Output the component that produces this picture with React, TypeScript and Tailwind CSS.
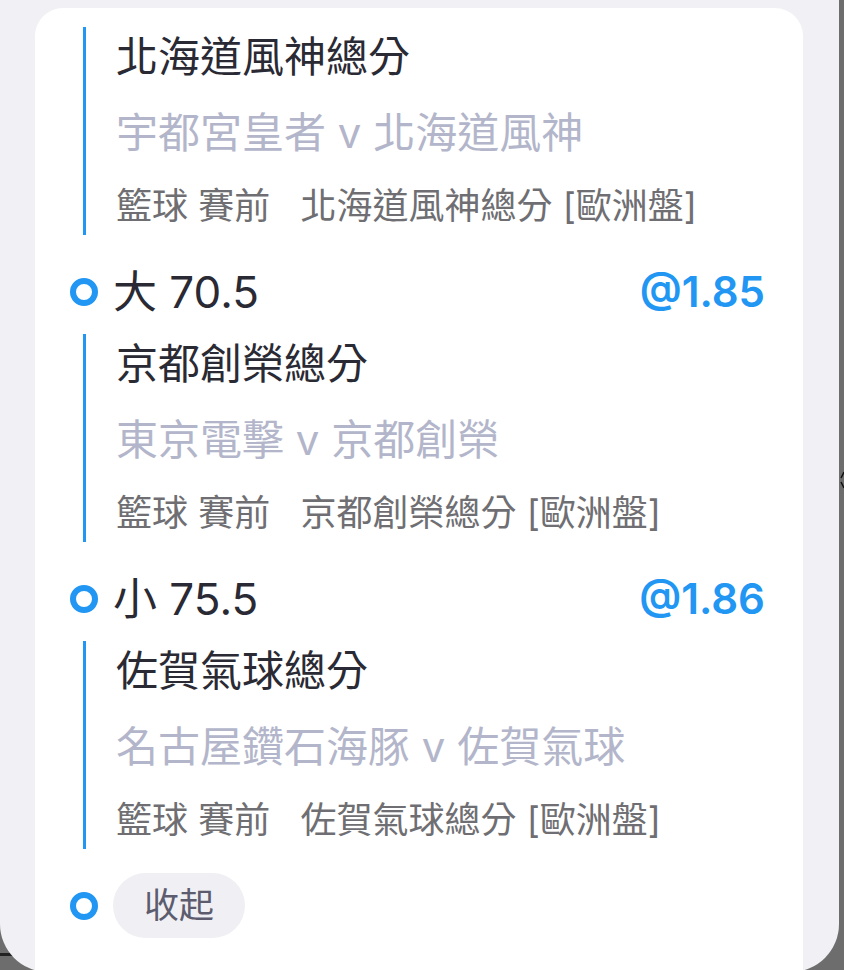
import React from 'react'

type Leg = { title: string; teams: string; meta: string }
type Pick = { label: string; odds: string }

const legs: Leg[] = [
  { title: '北海道風神總分', teams: '宇都宮皇者 v 北海道風神', meta: '北海道風神總分 [歐洲盤]' },
  { title: '京都創榮總分', teams: '東京電擊 v 京都創榮', meta: '京都創榮總分 [歐洲盤]' },
  { title: '佐賀氣球總分', teams: '名古屋鑽石海豚 v 佐賀氣球', meta: '佐賀氣球總分 [歐洲盤]' },
]

const picks: Pick[] = [
  { label: '大 70.5', odds: '@1.85' },
  { label: '小 75.5', odds: '@1.86' },
]

const font = { fontFamily: 'Inter, "Noto Sans CJK TC", sans-serif' }

function Dot() {
  return (
    <div className="w-[28px] flex justify-center">
      <div className="shrink-0 w-[28px] h-[28px] rounded-full border-[6px] border-[#2196f3] bg-white" />
    </div>
  )
}

function LegBlock({ leg }: { leg: Leg }) {
  return (
    <div className="flex h-[208px]">
      <div className="w-[28px] flex justify-center">
        <div className="w-[3px] h-full bg-[#2196f3]" />
      </div>
      <div className="flex flex-col pl-[18px]">
        <div className="text-[42px] leading-[60px] text-[#2a2a34]">{leg.title}</div>
        <div className="mt-[16px] text-[42px] leading-[60px] text-[#b3b6ca] whitespace-pre">{leg.teams}</div>
        <div className="mt-[18px] text-[36px] leading-[50px] text-[#6f6f73] whitespace-pre">
          {'籃球 賽前   ' + leg.meta}
        </div>
      </div>
    </div>
  )
}

function PickRow({ pick }: { pick: Pick }) {
  return (
    <div className="h-[99px] pt-[14px] flex items-center">
      <Dot />
      <div className="flex-1 flex items-center justify-between pl-[15px] pr-[38px]">
        <span className="text-[44px] leading-none text-[#2a2a34] whitespace-pre">{pick.label}</span>
        <span className="text-[42px] leading-none font-semibold text-[#2196f3]">{pick.odds}</span>
      </div>
    </div>
  )
}

export default function App() {
  return (
    <div className="relative w-[844px] h-[970px] bg-[#6d6d6d] overflow-hidden" style={font}>
      <svg className="absolute left-[840px] top-[470px]" width="4" height="20" viewBox="0 0 4 20">
        <path d="M4 2 L1 8 M1 12 L4 18" stroke="#111" strokeWidth="1.5" fill="none" />
      </svg>
      <div className="absolute left-0 top-[953px] w-[18px] h-[3px] bg-[#222]" />
      <div className="relative w-[839px] h-[972px] bg-[#f0f0f5] rounded-b-[48px] overflow-hidden pt-[8px]">
        <div className="ml-[35px] w-[768px] h-full bg-white rounded-t-[28px] pt-[19px] pl-[35px]">
          <LegBlock leg={legs[0]} />
          <PickRow pick={picks[0]} />
          <LegBlock leg={legs[1]} />
          <PickRow pick={picks[1]} />
          <LegBlock leg={legs[2]} />
          <div className="mt-[24px] flex items-center">
            <Dot />
            <button className="ml-[15px] h-[65px] w-[132px] rounded-full bg-[#efeff4] text-[35px] leading-none text-[#5c5c6e]">
              收起
            </button>
          </div>
        </div>
      </div>
    </div>
  )
}
